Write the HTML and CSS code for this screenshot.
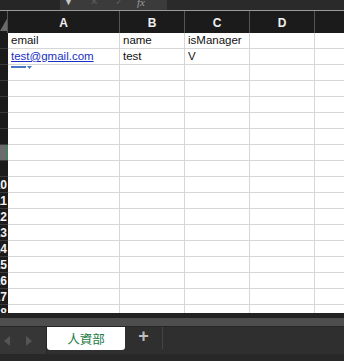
FILE: index.html
```html
<!DOCTYPE html>
<html>
<head>
<meta charset="utf-8">
<link rel="stylesheet" href="styles.css">
</head>
<body>
<div class="app">
  <div class="topbar">
    <div class="namebox"></div>
    <div class="fbtns"><span class="tri">▼</span><span class="dim">✕</span><span class="dim">✓</span><span class="fx">fx</span></div>
    <div class="formula"></div>
  </div>
  <div class="sheet">
    <div class="grid" id="grid">
      <div class="corner"><svg width="8" height="22"><polygon points="8,6 8,20 0,20" fill="#6b6b6b"/></svg></div>
      <div class="colh">A</div><div class="colh">B</div><div class="colh">C</div><div class="colh">D</div><div class="colh last"></div>

      <div class="rowh"></div><div class="cell">email</div><div class="cell">name</div><div class="cell">isManager</div><div class="cell"></div><div class="cell"></div>
      <div class="rowh"></div><div class="cell"><span class="link">test@gmail.com</span></div><div class="cell">test</div><div class="cell">V</div><div class="cell"></div><div class="cell"></div>
      <div class="rowh"></div><div class="cell tagcell"><span class="tag"><span class="tagbar"></span><svg width="5" height="3"><polygon points="0,0 5,0 2.5,3" fill="#4a78c8"/></svg></span></div><div class="cell"></div><div class="cell"></div><div class="cell"></div><div class="cell"></div>
      <div class="rowh"></div><div class="cell"></div><div class="cell"></div><div class="cell"></div><div class="cell"></div><div class="cell"></div>
      <div class="rowh"></div><div class="cell"></div><div class="cell"></div><div class="cell"></div><div class="cell"></div><div class="cell"></div>
      <div class="rowh"></div><div class="cell"></div><div class="cell"></div><div class="cell"></div><div class="cell"></div><div class="cell"></div>
      <div class="rowh"></div><div class="cell"></div><div class="cell"></div><div class="cell"></div><div class="cell"></div><div class="cell"></div>
      <div class="rowh sel"></div><div class="cell"></div><div class="cell"></div><div class="cell"></div><div class="cell"></div><div class="cell"></div>
      <div class="rowh"></div><div class="cell"></div><div class="cell"></div><div class="cell"></div><div class="cell"></div><div class="cell"></div>
      <div class="rowh">10</div><div class="cell"></div><div class="cell"></div><div class="cell"></div><div class="cell"></div><div class="cell"></div>
      <div class="rowh">11</div><div class="cell"></div><div class="cell"></div><div class="cell"></div><div class="cell"></div><div class="cell"></div>
      <div class="rowh">12</div><div class="cell"></div><div class="cell"></div><div class="cell"></div><div class="cell"></div><div class="cell"></div>
      <div class="rowh">13</div><div class="cell"></div><div class="cell"></div><div class="cell"></div><div class="cell"></div><div class="cell"></div>
      <div class="rowh">14</div><div class="cell"></div><div class="cell"></div><div class="cell"></div><div class="cell"></div><div class="cell"></div>
      <div class="rowh">15</div><div class="cell"></div><div class="cell"></div><div class="cell"></div><div class="cell"></div><div class="cell"></div>
      <div class="rowh">16</div><div class="cell"></div><div class="cell"></div><div class="cell"></div><div class="cell"></div><div class="cell"></div>
      <div class="rowh">17</div><div class="cell"></div><div class="cell"></div><div class="cell"></div><div class="cell"></div><div class="cell"></div>
      <div class="rowh">18</div><div class="cell"></div><div class="cell"></div><div class="cell"></div><div class="cell"></div><div class="cell"></div>
    </div>
  </div>
  <div class="gap"></div>
  <div class="scrollbar"></div>
  <div class="tabbar">
    <div class="nav">
      <svg width="8" height="10" viewBox="0 0 8 10"><polygon points="7,0 7,10 1,5" fill="#555"/></svg>
      <svg width="8" height="10" viewBox="0 0 8 10"><polygon points="1,0 1,10 7,5" fill="#555"/></svg>
    </div>
    <div class="tab">人資部</div>
    <div class="add">+</div>
    <div class="rest"></div>
  </div>
  <div class="status"></div>
</div>
</body>
</html>
```
FILE: styles.css
```css
* { box-sizing: border-box; }
html, body { margin: 0; padding: 0; background: #2b2b2b; }
body { width: 344px; height: 361px; overflow: hidden; font-family: "Liberation Sans", Arial, sans-serif; }
.app { display: flex; flex-direction: column; width: 344px; height: 361px; }

.topbar { height: 11px; display: flex; background: #262626; border-bottom: 1px solid #9a9a9a; overflow: hidden; }
.namebox { width: 60px; background: #262626; }
.fbtns { width: 107px; background: #3b3b3b; display: flex; align-items: flex-start; position: relative; color: #8a8a8a; font-size: 10px; line-height: 10px; }
.fbtns .tri { margin-left: 4px; margin-top: -3px; color: #c8c8c8; font-size: 9px; }
.fbtns .dim { margin-left: 17px; margin-top: -3px; color: #5a5a5a; }
.fbtns .fx { margin-left: 14px; margin-top: -3px; color: #9a9a9a; font-style: italic; font-family: "Liberation Serif", serif; font-size: 11px; }
.formula { flex: 1; background: #2a2a2a; }

.sheet { height: 302px; overflow: hidden; background: #fff; }
.grid { display: grid; grid-template-columns: 8px 112px 65px 65px 65px 65px; grid-template-rows: 22px; grid-auto-rows: 16px; }

.corner { background: #1b1b1b; border-right: 1px solid #555; overflow: hidden; }
.corner svg { display: block; }
.colh { background: #1b1b1b; color: #f0f0f0; font-size: 12px; font-weight: bold; display: flex; align-items: center; justify-content: center; border-right: 1px solid #555; padding-top: 1px; }
.colh.last { border-right: none; }

.rowh { background: #1b1b1b; color: #f2f2f2; font-size: 12px; font-weight: bold; display: flex; justify-content: flex-end; align-items: center; overflow: hidden; border-bottom: 1px solid #3a3a3a; padding-right: 1px; white-space: nowrap; }
.rowh.sel { background: #6b6b6b; box-shadow: inset -1px 0 0 #2e8b57; }

.cell { border-right: 1px solid #d6d6d6; border-bottom: 1px solid #d6d6d6; font-size: 11.5px; color: #111; padding: 0 3px 1px; display: flex; align-items: flex-end; white-space: nowrap; line-height: 13px; }
.link { color: #1a2fc4; text-decoration: underline; text-underline-offset: 1px; }
.tagcell { align-items: flex-start; padding-top: 1px; }
.tag { display: flex; align-items: flex-start; gap: 1px; }
.tagbar { width: 15px; height: 2px; background: #4a78c8; display: block; }
.tag svg { display: block; }

.gap { height: 5px; background: #222; }
.scrollbar { height: 9px; background: #4e4e4e; border-bottom: 1px solid #262626; }
.tabbar { height: 27px; display: flex; background: #2f2f2f; }
.nav { width: 47px; background: #363636; display: flex; align-items: center; gap: 14px; padding-left: 3px; border-right: 1px solid #262626; }
.nav svg { display: block; }
.tab { width: 78px; height: 23px; background: #fff; border-radius: 0 0 3px 3px; color: #1e7a46; font-size: 12.5px; font-family: "Noto Sans CJK TC", "Noto Sans CJK SC", sans-serif; display: flex; align-items: center; justify-content: center; }
.add { width: 38px; color: #bdbdbd; font-size: 18px; display: flex; align-items: center; justify-content: center; padding-bottom: 4px; border-right: 1px solid #444; height: 22px; font-weight: bold; }
.rest { flex: 1; }
.status { flex: 1; background: #282828; }
```
